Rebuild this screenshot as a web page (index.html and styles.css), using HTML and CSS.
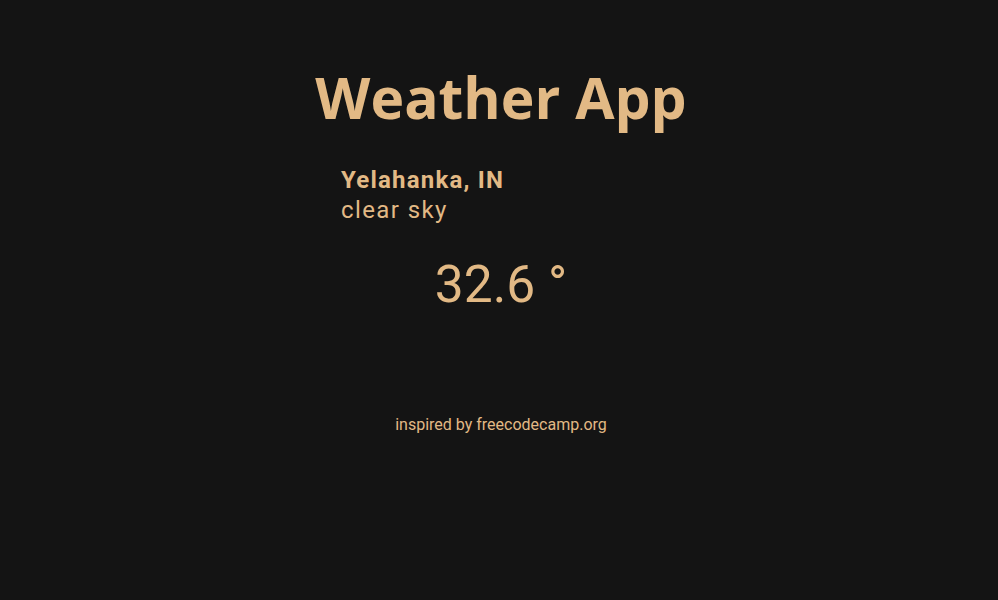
FILE: index.html
```html
<!DOCTYPE html>
<html>
<head>
<meta charset="utf-8">
<link rel="stylesheet" href="styles.css">
</head>
<body>
<main class="app">
  <h1 class="title">Weather App</h1>
  <section class="card">
    <div class="location">
      <div class="city">Yelahanka, IN</div>
      <div class="desc">clear sky</div>
    </div>
    <div class="temp">32.6 °</div>
  </section>
  <footer class="footer">inspired by freecodecamp.org</footer>
</main>
</body>
</html>
```
FILE: styles.css
```css
html, body {
  margin: 0;
  padding: 0;
  background: #141414;
  height: 100%;
}
body {
  font-family: Roboto, "Liberation Sans", sans-serif;
  color: #e2b985;
}
.app {
  display: flex;
  flex-direction: column;
  align-items: center;
  padding-left: 4px;
}
.title {
  margin: 64px 0 0;
  font-family: "Open Sans", sans-serif;
  font-weight: 700;
  font-size: 57px;
  line-height: 66px;
}
.card {
  width: 320px;
  margin-top: 35px;
  display: flex;
  flex-direction: column;
}
.location {
  display: flex;
  flex-direction: column;
}
.city {
  font-size: 24px;
  font-weight: 700;
  line-height: 30px;
  letter-spacing: 1.2px;
}
.desc {
  font-size: 24px;
  line-height: 30px;
  letter-spacing: 1.4px;
}
.temp {
  align-self: center;
  margin-top: 30px;
  font-size: 51.5px;
  line-height: 60px;
}
.footer {
  margin-top: 100px;
  font-size: 16px;
}
```
